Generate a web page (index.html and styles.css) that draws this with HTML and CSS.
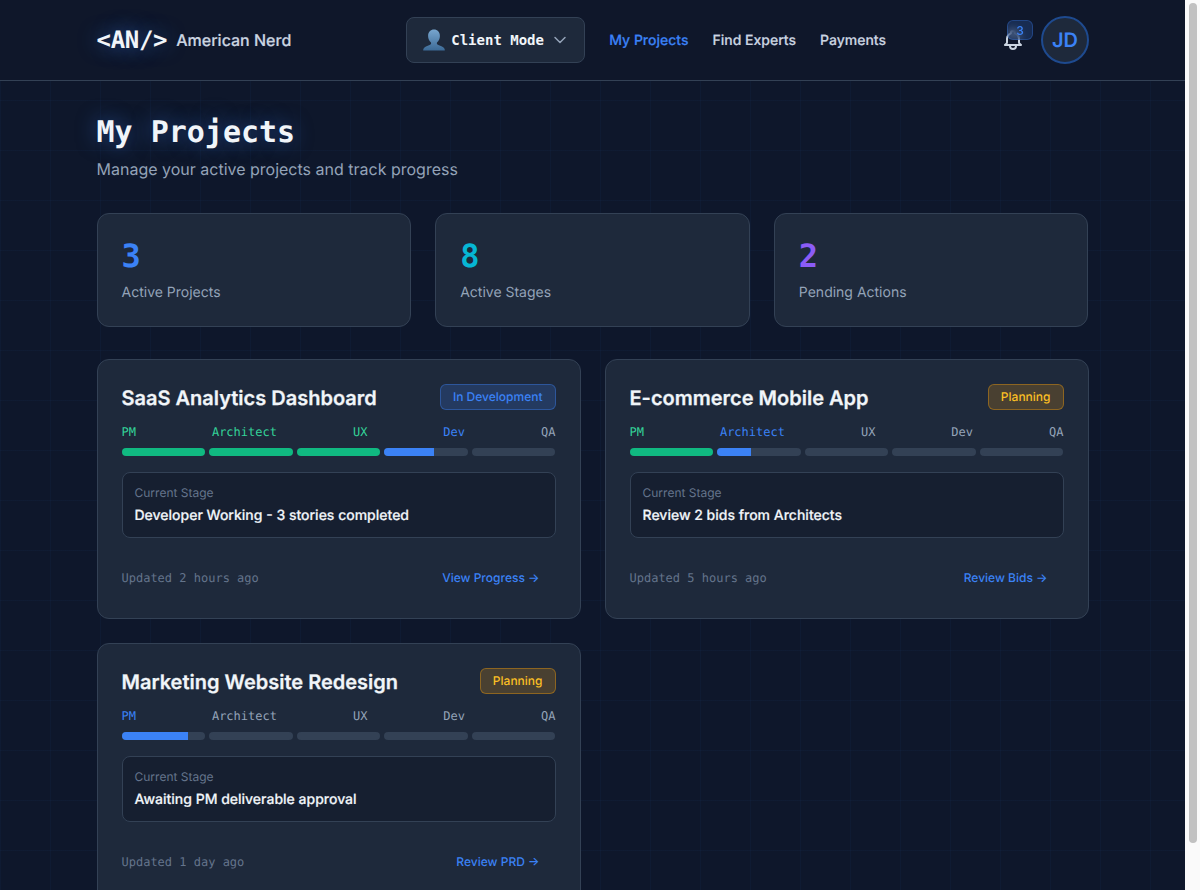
FILE: index.html
```html
<!DOCTYPE html>
<html lang="en">
<head>
<meta charset="utf-8">
<title>My Projects</title>
<link rel="stylesheet" href="styles.css">
</head>
<body>
<header class="topbar">
  <div class="topbar-inner">
    <a class="brand"><span class="brand-mark">&lt;AN/&gt;</span><span class="brand-name">American Nerd</span></a>
    <div class="nav-group">
      <button class="mode">
        <svg class="mode-icon" viewBox="0 0 22 22" width="22" height="22"><defs><linearGradient id="pg" x1="0" y1="0" x2="0" y2="1"><stop offset="0" stop-color="#78a6cf"/><stop offset="1" stop-color="#3c6a96"/></linearGradient></defs><path fill="url(#pg)" d="M11 0.5c3.4 0 5.9 2.6 5.9 6.4 0 2.7-1.2 5.100-2.900 6.500-.4 1.200 0 2 1.400 2.600 2.300 1 5.300 1.700 6.100 3.800.2.500.3 1 .3 1.700H.2c0-.7.1-1.200.3-1.700.8-2.100 3.800-2.800 6.100-3.800 1.400-.6 1.800-1.400 1.400-2.600C6.300 12 5.100 9.600 5.100 6.900 5.100 3.100 7.600.5 11 .5z"/></svg>
        <span class="mode-label">Client Mode</span>
        <svg class="chevron" viewBox="0 0 24 24" width="20" height="20" fill="none" stroke="currentColor" stroke-width="1.8" stroke-linecap="round" stroke-linejoin="round"><path d="M6 9l6 6 6-6"/></svg>
      </button>
      <nav class="nav">
        <a class="nav-link is-current">My Projects</a>
        <a class="nav-link">Find Experts</a>
        <a class="nav-link">Payments</a>
      </nav>
    </div>
    <div class="user-group">
      <button class="bell">
        <svg viewBox="0 0 24 24" width="24" height="24" fill="none" stroke="currentColor" stroke-width="2" stroke-linecap="round" stroke-linejoin="round"><path d="M15 17h5l-1.405-1.405A2.032 2.032 0 0118 14.158V11a6.002 6.002 0 00-4-5.659V5a2 2 0 10-4 0v.341C7.67 6.165 6 8.388 6 11v3.159c0 .538-.214 1.055-.595 1.436L4 17h5m6 0v1a3 3 0 11-6 0v-1m6 0H9"/></svg>
        <span class="bell-count">3</span>
      </button>
      <div class="avatar">JD</div>
    </div>
  </div>
</header>

<main class="page">
  <h1 class="page-title">My Projects</h1>
  <p class="page-sub">Manage your active projects and track progress</p>

  <section class="stats">
    <div class="stat"><div class="stat-num tone-blue">3</div><div class="stat-label">Active Projects</div></div>
    <div class="stat"><div class="stat-num tone-cyan">8</div><div class="stat-label">Active Stages</div></div>
    <div class="stat"><div class="stat-num tone-purple">2</div><div class="stat-label">Pending Actions</div></div>
  </section>

  <section class="projects">
    <article class="project">
      <div class="project-head"><h2 class="project-title">SaaS Analytics Dashboard</h2><span class="badge badge-dev">In Development</span></div>
      <div class="steps"><span class="is-done">PM</span><span class="is-done">Architect</span><span class="is-done">UX</span><span class="is-active">Dev</span><span>QA</span></div>
      <div class="bars">
        <div class="bar"><div class="fill fill-done" style="width:100%"></div></div>
        <div class="bar"><div class="fill fill-done" style="width:100%"></div></div>
        <div class="bar"><div class="fill fill-done" style="width:100%"></div></div>
        <div class="bar"><div class="fill fill-active" style="width:60%"></div></div>
        <div class="bar"></div>
      </div>
      <div class="current"><div class="current-label">Current Stage</div><div class="current-text">Developer Working - 3 stories completed</div></div>
      <div class="project-foot"><span class="updated">Updated 2 hours ago</span><a class="action">View Progress →</a></div>
    </article>

    <article class="project">
      <div class="project-head"><h2 class="project-title">E-commerce Mobile App</h2><span class="badge badge-plan">Planning</span></div>
      <div class="steps"><span class="is-done">PM</span><span class="is-active">Architect</span><span>UX</span><span>Dev</span><span>QA</span></div>
      <div class="bars">
        <div class="bar"><div class="fill fill-done" style="width:100%"></div></div>
        <div class="bar"><div class="fill fill-active" style="width:40%"></div></div>
        <div class="bar"></div>
        <div class="bar"></div>
        <div class="bar"></div>
      </div>
      <div class="current"><div class="current-label">Current Stage</div><div class="current-text">Review 2 bids from Architects</div></div>
      <div class="project-foot"><span class="updated">Updated 5 hours ago</span><a class="action">Review Bids →</a></div>
    </article>

    <article class="project">
      <div class="project-head"><h2 class="project-title">Marketing Website Redesign</h2><span class="badge badge-plan">Planning</span></div>
      <div class="steps"><span class="is-active">PM</span><span>Architect</span><span>UX</span><span>Dev</span><span>QA</span></div>
      <div class="bars">
        <div class="bar"><div class="fill fill-active" style="width:80%"></div></div>
        <div class="bar"></div>
        <div class="bar"></div>
        <div class="bar"></div>
        <div class="bar"></div>
      </div>
      <div class="current"><div class="current-label">Current Stage</div><div class="current-text">Awaiting PM deliverable approval</div></div>
      <div class="project-foot"><span class="updated">Updated 1 day ago</span><a class="action">Review PRD →</a></div>
    </article>
  </section>
</main>
<div class="scroll-track" aria-hidden="true"><div class="scroll-thumb"></div></div>
</body>
</html>
```
FILE: styles.css
```css
* { box-sizing: border-box; }
body {
  margin: 0;
  padding-right: 15px;
  font-family: Inter, "Liberation Sans", sans-serif;
  text-rendering: geometricPrecision;
  color: #f1f5f9;
  background-color: #0e172b;
  background-image:
    linear-gradient(rgba(59, 130, 246, 0.04) 1px, transparent 1px),
    linear-gradient(90deg, rgba(59, 130, 246, 0.04) 1px, transparent 1px);
  background-size: 50px 50px;
}
.scroll-track {
  position: fixed;
  top: 0;
  right: 0;
  bottom: 0;
  width: 15px;
  padding: 3px 3px 0 4px;
  background: #fafafa;
}
.scroll-thumb { height: 840px; background: #c1c1c1; border-radius: 4px; }
.topbar {
  height: 81px;
  background: #0f172a;
  border-bottom: 1px solid #334155;
}
.topbar-inner {
  max-width: 992px;
  height: 80px;
  margin: 0 auto;
  display: flex;
  align-items: center;
  justify-content: space-between;
}
.brand { display: flex; align-items: center; gap: 9px; }
.brand-mark {
  font-family: "DejaVu Sans Mono", monospace;
  font-size: 24px;
  font-weight: 700;
  letter-spacing: -0.3px;
  color: #f1f5f9;
  text-shadow: 0 0 20px rgba(59, 130, 246, 0.6);
}
.brand-name { font-size: 16px; font-weight: 500; color: #cbd5e1; -webkit-text-stroke: 0.2px; }
.nav-group { display: flex; align-items: center; gap: 24px; }
.mode {
  width: 179px;
  height: 46px;
  padding: 0 16px;
  display: flex;
  align-items: center;
  gap: 6px;
  background: #1e293b;
  border: 1px solid #334155;
  border-radius: 8px;
  color: #f1f5f9;
}
.mode-icon { flex: none; }
.mode-label { font-family: "DejaVu Sans Mono", monospace; font-size: 14px; font-weight: 700; white-space: nowrap; }
.chevron { flex: none; color: #94a3b8; }
.nav { display: flex; gap: 24px; padding-top: 1px; }
.nav-link { font-size: 14px; line-height: 20px; font-weight: 500; color: #cbd5e1; -webkit-text-stroke: 0.2px; }
.nav-link.is-current { color: #3b82f6; }
.user-group { display: flex; align-items: center; gap: 16px; margin-right: -0.5px; }
.bell {
  position: relative;
  width: 24px;
  height: 24px;
  padding: 0;
  background: none;
  border: 0;
  color: #cbd5e1;
}
.bell svg { display: block; }
.bell-count {
  position: absolute;
  top: -8px;
  left: 6px;
  width: 26px;
  height: 20px;
  display: flex;
  align-items: center;
  justify-content: center;
  font-family: Inter, sans-serif;
  font-size: 12px;
  font-weight: 500;
  color: #3b82f6;
  background: rgba(59, 130, 246, 0.2);
  border: 1px solid rgba(59, 130, 246, 0.3);
  border-radius: 6px;
  backdrop-filter: blur(4px);
}
.avatar {
  width: 48px;
  height: 48px;
  display: flex;
  align-items: center;
  justify-content: center;
  font-size: 20px;
  font-weight: 600;
  color: #3b82f6;
  background: #1e293b;
  border: 2px solid #1e4a8f;
  border-radius: 50%;
}
.page { max-width: 992px; margin: 0 auto; padding: 32px 0; }
.page-title {
  margin: 0 0 4px;
  font-family: "DejaVu Sans Mono", monospace;
  font-size: 30px;
  line-height: 40px;
  font-weight: 700;
  color: #f1f5f9;
  text-shadow: 0 0 20px rgba(59, 130, 246, 0.5);
}
.page-sub { margin: 0 0 32px; font-size: 16px; line-height: 24px; color: #94a3b8; }
.stats { display: grid; grid-template-columns: repeat(3, 1fr); gap: 24px; margin-bottom: 32px; }
.stat {
  height: 114px;
  padding: 24px;
  background: #1e293b;
  border: 1px solid #334155;
  border-radius: 12px;
}
.stat-num { font-family: "DejaVu Sans Mono", monospace; font-size: 32px; line-height: 36px; font-weight: 700; margin-bottom: 8px; }
.tone-blue { color: #3b82f6; }
.tone-cyan { color: #06b6d4; }
.tone-purple { color: #8b5cf6; }
.stat-label { font-size: 14px; line-height: 21px; color: #94a3b8; }
.projects { display: grid; grid-template-columns: repeat(2, 1fr); gap: 24px; }
.project {
  padding: 24px;
  background: #1e293b;
  border: 1px solid #334155;
  border-radius: 12px;
}
.project-head { display: flex; align-items: flex-start; justify-content: space-between; margin-bottom: 12px; }
.project-title { margin: 0; font-size: 20px; line-height: 28px; font-weight: 600; color: #f1f5f9; -webkit-text-stroke: 0.25px; }
.badge {
  height: 26px;
  padding: 0 12px 1px;
  display: flex;
  align-items: center;
  font-size: 12px;
  font-weight: 500;
  border: 1px solid;
  border-radius: 6px;
}
.badge-dev { color: #3b82f6; background: rgba(59, 130, 246, 0.2); border-color: rgba(59, 130, 246, 0.4); }
.badge-plan { color: #fbbf24; background: rgba(245, 158, 11, 0.2); border-color: rgba(245, 158, 11, 0.4); }
.steps {
  display: flex;
  justify-content: space-between;
  margin-bottom: 8px;
  font-family: "DejaVu Sans Mono", monospace;
  font-size: 12px;
  line-height: 16px;
  color: #94a3b8;
}
.is-done { color: #34d399; }
.is-active { color: #3b82f6; }
.bars { display: flex; gap: 4px; margin-bottom: 16px; }
.bar { flex: 1; height: 8px; background: #334155; border-radius: 4px; overflow: hidden; }
.fill { height: 100%; }
.fill-done { background: #10b981; }
.fill-active { background: #3b82f6; }
.current {
  height: 66px;
  padding: 12px;
  background: #161f30;
  border: 1px solid #334155;
  border-radius: 8px;
  margin-bottom: 23px;
}
.current-label { font-size: 12px; line-height: 16px; color: #64748b; margin-bottom: 5px; }
.current-text { font-size: 14px; line-height: 20px; font-weight: 500; color: #f1f5f9; -webkit-text-stroke: 0.2px; }
.project-foot { display: flex; align-items: center; justify-content: space-between; height: 33px; }
.updated { font-family: "DejaVu Sans Mono", monospace; font-size: 12px; color: #64748b; }
.action { padding: 0 16px; font-size: 12px; font-weight: 500; color: #3b82f6; }
```
